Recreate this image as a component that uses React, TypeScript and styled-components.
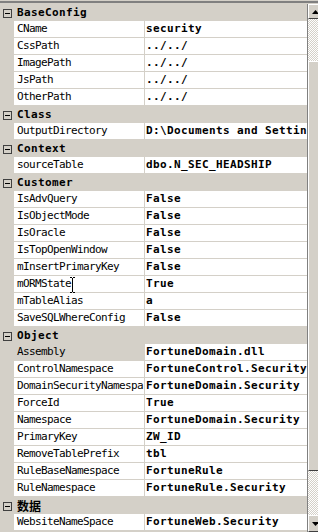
import styled, { createGlobalStyle } from "styled-components";

const GlobalStyle = createGlobalStyle`
  html, body {
    margin: 0;
    padding: 0;
    background: #d4d0c8;
    overflow: hidden;
  }
`;

const Panel = styled.div`
  width: 318px;
  height: 532px;
  padding-top: 1px;
  box-sizing: border-box;
  background: #d4d0c8;
  overflow: hidden;
`;

const Inner = styled.div`
  border-top: 2px solid #808080;
  padding-top: 1px;
  display: flex;
  width: 340px;
`;

const Grid = styled.div`
  width: 307px;
  flex: none;
  display: flex;
  flex-direction: column;
`;

const HeaderRow = styled.div`
  display: grid;
  grid-template-columns: 14px 1fr;
  height: 17px;
  align-items: center;
  background: #d4d0c8;
`;

const ToggleBox = styled.div`
  width: 7px;
  height: 7px;
  margin-left: 3px;
  margin-top: 1px;
  border: 1px solid #404040;
  position: relative;
  &::after {
    content: "";
    position: absolute;
    left: 1px;
    top: 3px;
    width: 5px;
    height: 1px;
    background: #000;
  }
`;

const HeaderText = styled.div<{ $cjk?: boolean }>`
  padding-left: 3px;
  font-family: ${(p) =>
    p.$cjk
      ? `"Noto Sans CJK SC", sans-serif`
      : `"DejaVu Sans Mono", monospace`};
  font-size: ${(p) => (p.$cjk ? "12px" : "11px")};
  font-weight: bold;
  letter-spacing: ${(p) => (p.$cjk ? "0" : "0.38px")};
  line-height: 16px;
  color: #000;
  white-space: nowrap;
`;

const PropRow = styled.div`
  display: grid;
  grid-template-columns: 14px 130px 1px 1fr;
  height: 17px;
  background: #d4d0c8;
  position: relative;
`;

const NameCell = styled.div<{ $selected?: boolean }>`
  grid-column: 2;
  height: 16px;
  padding-left: 3px;
  background: ${(p) => (p.$selected ? "#d4d0c8" : "#ffffff")};
  font-family: "DejaVu Sans Mono", monospace;
  font-size: 11px;
  letter-spacing: -0.62px;
  line-height: 16px;
  color: #000;
  white-space: nowrap;
  overflow: hidden;
`;

const ValueCell = styled.div`
  grid-column: 4;
  height: 16px;
  padding-left: 1px;
  background: #ffffff;
  font-family: "DejaVu Sans Mono", monospace;
  font-size: 11px;
  font-weight: bold;
  letter-spacing: 0.38px;
  line-height: 16px;
  color: #000;
  white-space: nowrap;
  overflow: hidden;
`;

const Cursor = styled.svg`
  position: absolute;
  left: 69px;
  top: 1px;
`;

const ScrollBar = styled.div`
  width: 16px;
  flex: none;
  border-left: 1px solid #808080;
  height: 528px;
  display: flex;
  flex-direction: column;
`;

const ArrowButton = styled.div<{ $h: number }>`
  height: ${(p) => p.$h}px;
  box-sizing: border-box;
  background: #d4d0c8;
  border-top: 1px solid #ffffff;
  border-left: 1px solid #ffffff;
  border-right: 1px solid #404040;
  border-bottom: 1px solid #404040;
  display: flex;
  align-items: center;
  justify-content: center;
  padding-right: 2px;
`;

const Track = styled.div<{ $h: number }>`
  height: ${(p) => p.$h}px;
  background-color: #d4d0c8;
  background-image: repeating-conic-gradient(#ffffff 0 25%, #d4d0c8 0 50%);
  background-size: 2px 2px;
`;

const Thumb = styled.div<{ $h: number }>`
  height: ${(p) => p.$h}px;
  box-sizing: border-box;
  background: #d4d0c8;
  border-top: 1px solid #ffffff;
  border-left: 1px solid #ffffff;
  border-right: 1px solid #404040;
  border-bottom: 1px solid #404040;
`;

type Category = { title: string; cjk?: boolean; rows: [string, string][] };

// names/values already cut where the grid cuts them in the shot
const categories: Category[] = [
  {
    title: "BaseConfig",
    rows: [
      ["CName", "security"],
      ["CssPath", "../../"],
      ["ImagePath", "../../"],
      ["JsPath", "../../"],
      ["OtherPath", "../../"],
    ],
  },
  {
    title: "Class",
    rows: [["OutputDirectory", "D:\\Documents and Settin"]],
  },
  {
    title: "Context",
    rows: [["sourceTable", "dbo.N_SEC_HEADSHIP"]],
  },
  {
    title: "Customer",
    rows: [
      ["IsAdvQuery", "False"],
      ["IsObjectMode", "False"],
      ["IsOracle", "False"],
      ["IsTopOpenWindow", "False"],
      ["mInsertPrimaryKey", "False"],
      ["mORMState", "True"],
      ["mTableAlias", "a"],
      ["SaveSQLWhereConfig", "False"],
    ],
  },
  {
    title: "Object",
    rows: [
      ["Assembly", "FortuneDomain.dll"],
      ["ControlNamespace", "FortuneControl.Security"],
      ["DomainSecurityNamespa", "FortuneDomain.Security"],
      ["ForceId", "True"],
      ["Namespace", "FortuneDomain.Security"],
      ["PrimaryKey", "ZW_ID"],
      ["RemoveTablePrefix", "tbl"],
      ["RuleBaseNamespace", "FortuneRule"],
      ["RuleNamespace", "FortuneRule.Security"],
    ],
  },
  {
    title: "数据",
    cjk: true,
    rows: [["WebsiteNameSpace", "FortuneWeb.Security"]],
  },
];

const IBeam = () => (
  <Cursor width="7" height="16" viewBox="0 0 7 16">
    <path d="M1 0.5h2M4 0.5h2M3.5 1v14M1 15.5h2M4 15.5h2" stroke="#000" strokeWidth="1" fill="none" />
  </Cursor>
);

const App = () => {
  return (
    <>
      <GlobalStyle />
      <Panel>
        <Inner>
          <Grid>
            {categories.map((cat) => (
              <div key={cat.title}>
                <HeaderRow>
                  <ToggleBox />
                  <HeaderText $cjk={cat.cjk}>{cat.title}</HeaderText>
                </HeaderRow>
                {cat.rows.map(([name, value]) => (
                  <PropRow key={name}>
                    <NameCell $selected={name === "Assembly"}>{name}</NameCell>
                    <ValueCell>{value}</ValueCell>
                    {name === "mORMState" && <IBeam />}
                  </PropRow>
                ))}
              </div>
            ))}
          </Grid>
          <ScrollBar>
            <ArrowButton $h={15}>
              <svg width="7" height="4" viewBox="0 0 7 4">
                <path d="M3.5 0L7 4H0z" fill="#000" />
              </svg>
            </ArrowButton>
            <Track $h={42} />
            <Thumb $h={410} />
            <Track $h={44} />
            <ArrowButton $h={17}>
              <svg width="7" height="4" viewBox="0 0 7 4">
                <path d="M0 0h7L3.5 4z" fill="#000" />
              </svg>
            </ArrowButton>
          </ScrollBar>
        </Inner>
      </Panel>
    </>
  );
};

export default App;
